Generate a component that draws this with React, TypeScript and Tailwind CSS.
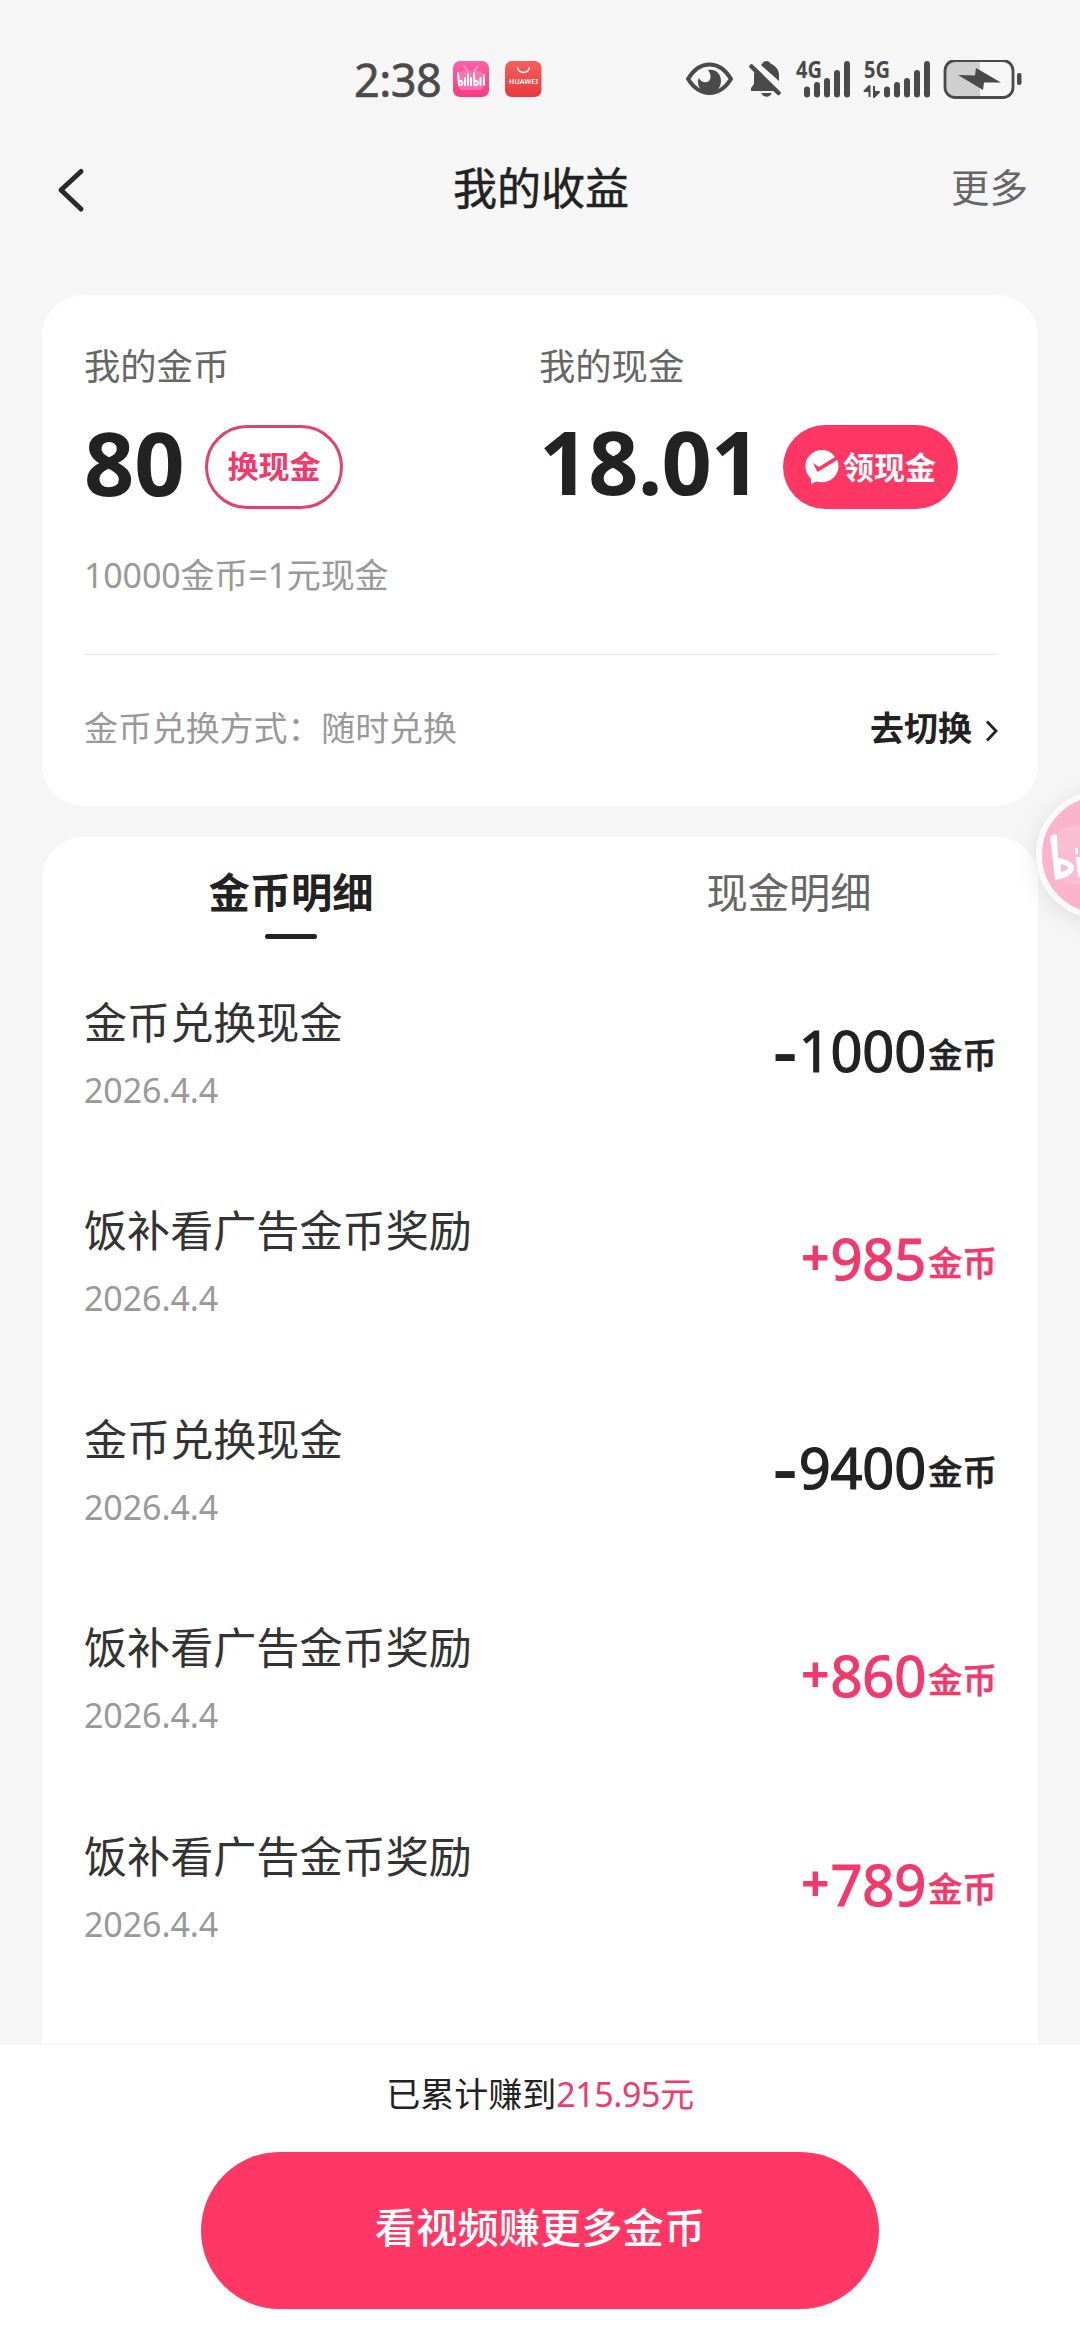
import React from "react";

type Entry = { title: string; date: string; amount: string; gain: boolean };

const entries: Entry[] = [
  { title: "金币兑换现金", date: "2026.4.4", amount: "1000", gain: false },
  { title: "饭补看广告金币奖励", date: "2026.4.4", amount: "985", gain: true },
  { title: "金币兑换现金", date: "2026.4.4", amount: "9400", gain: false },
  { title: "饭补看广告金币奖励", date: "2026.4.4", amount: "860", gain: true },
  { title: "饭补看广告金币奖励", date: "2026.4.4", amount: "789", gain: true },
];

function Signal({ label, data }: { label: string; data?: boolean }) {
  return (
    <svg width="56" height="40" viewBox="0 0 56 40" fill="#4a4a4a" className="overflow-visible">
      <text x="0" y="17.500" fontSize="23.500" fontWeight="700" textLength="26" lengthAdjust="spacingAndGlyphs" fontFamily="Noto Sans">
        {label}
      </text>
      {data ? (
        <>
          <path d="M5.5 37V26L0.5 31H5.5M10 26V37L15 32H10" stroke="#4a4a4a" strokeWidth="2" strokeLinejoin="round" />
          <rect x="20" y="26.500" width="6" height="11" rx="3" />
          <rect x="30" y="22" width="6" height="15.500" rx="3" />
          <rect x="40" y="18" width="6" height="19.500" rx="3" />
          <rect x="50" y="10" width="6" height="27.500" rx="3" />
          <rect x="60" y="1" width="6" height="36.500" rx="3" />
        </>
      ) : (
        <>
          <rect x="8" y="26.500" width="6" height="11" rx="3" />
          <rect x="18" y="22" width="6" height="15.500" rx="3" />
          <rect x="28" y="18" width="6" height="19.500" rx="3" />
          <rect x="38" y="10" width="6" height="27.500" rx="3" />
          <rect x="48" y="1" width="6" height="36.500" rx="3" />
        </>
      )}
    </svg>
  );
}

function StatusBar() {
  return (
    <div className="flex h-[120px] items-start pt-[60px] pl-[354px] text-[#4a4a4a]">
      <span className="w-[99px] text-[45px] leading-[39px] tracking-[-0.5px] [-webkit-text-stroke:0.600px_#4a4a4a]">2:38</span>
      <svg width="36" height="37" viewBox="0 0 36 37">
        <defs>
          <linearGradient id="pinkIcon" x1="0" y1="0" x2="0" y2="1">
            <stop offset="0" stopColor="#fb62a4" />
            <stop offset="1" stopColor="#fb3a82" />
          </linearGradient>
        </defs>
        <rect y="1" width="36" height="36" rx="7" fill="url(#pinkIcon)" />
        <path d="M11 6l4 5M25 6l-4 5" stroke="#fda3ca" strokeWidth="2" />
        <rect x="6" y="11" width="24" height="19" rx="4" fill="#fd8fbe" opacity="0.6" />
        <path
          d="M5 13l1 12c4 1 5-4 1-4M12 18v7M15 14v11M18 18v7M21 13l.5 12c4 1 5-4 1-4M27.500 18v7M31 15v10"
          fill="none"
          stroke="#fff"
          strokeWidth="2"
          strokeLinecap="round"
        />
      </svg>
      <svg width="37" height="37" viewBox="0 0 37 37" className="ml-[16px]">
        <defs>
          <linearGradient id="redIcon" x1="0" y1="0" x2="0" y2="1">
            <stop offset="0" stopColor="#f4605f" />
            <stop offset="1" stopColor="#e9383c" />
          </linearGradient>
        </defs>
        <rect y="1" width="36.500" height="36" rx="7" fill="url(#redIcon)" />
        <path d="M12.500 7a6 5.500 0 0 0 12 0" fill="none" stroke="#fff" strokeWidth="1.400" />
        <text x="4" y="24" fontSize="7" fontWeight="600" fill="#fff" textLength="29" fontFamily="Noto Sans">
          HUAWEI
        </text>
      </svg>
      <svg width="48" height="40" viewBox="0 0 48 40" className="ml-[144px]">
        <path d="M2 19C8 9 15 4.500 23.500 4.500S39 9 45 19C39 28.500 32 33 23.500 33S8 28.500 2 19Z" fill="none" stroke="#4a4a4a" strokeWidth="4" strokeLinejoin="round" />
        <path d="M22 10c8-1 13 4 13 11s-5 12-12 12-11-5-11-11c0-2 .3-3 1-4 2 4 5 5 8 4 4-1 5-7 1-12Z" fill="#4a4a4a" />
      </svg>
      <svg width="34" height="40" viewBox="0 0 34 40" className="ml-[15px]" fill="#4a4a4a">
        <path d="M6 10.500L27.500 31H2v-3l3-4V14Z" />
        <path d="M13 4C14 2 15.500 1 17.500 1s3.500 1 4 2.500C27 6 30 10 30 15v6L12 5Z" />
        <path d="M12.500 33h10c-1 5-9 5-10 0Z" />
        <path d="M2.500 6.500L29.500 33" stroke="#4a4a4a" strokeWidth="4.500" strokeLinecap="round" />
      </svg>
      <div className="ml-[13px] flex">
        <Signal label="4G" />
      </div>
      <div className="ml-[12px] flex">
        <Signal label="5G" data />
      </div>
      <svg width="80" height="40" viewBox="0 0 80 40" className="ml-[23px]">
        <path d="M11 1H37V37H11Q2 37 2 28V10Q2 1 11 1Z" fill="#cfcfcf" />
        <rect x="2" y="0.500" width="68" height="37" rx="10" fill="none" stroke="#4a4a4a" strokeWidth="2.800" />
        <path d="M15 15L32 15.500 33 8 58 22.500 41 22.500 40 30Z" fill="#4a4a4a" />
        <rect x="74" y="13" width="4.500" height="12" rx="2" fill="#4a4a4a" />
      </svg>
    </div>
  );
}

function BalanceCard() {
  return (
    <section className="mx-[42px] h-[511px] rounded-[42px] bg-white pl-[42px] pr-[40px] pt-[46px]">
      <div className="flex">
        <div className="w-[455px]">
          <div className="h-[50px] text-[36.300px] leading-[50px] text-[#666]">我的金币</div>
          <div className="mt-[34px] flex h-[84px] items-center">
            <span className="w-[121px] pb-[11px] text-[88px] leading-[70px] font-bold">80</span>
            <button className="flex h-[84px] w-[138px] items-center justify-center rounded-full border-[3px] border-[#e2416f] pb-[3px] text-[31px] leading-[40px] font-bold text-[#f2396b]">
              换现金
            </button>
          </div>
          <div className="mt-[42px] h-[48px] text-[34px] leading-[48px] tracking-[-0.15px] whitespace-nowrap text-[#999]">10000金币=1元现金</div>
        </div>
        <div>
          <div className="h-[50px] text-[36.300px] leading-[50px] text-[#666]">我的现金</div>
          <div className="mt-[34px] flex h-[84px] items-center">
            <span className="w-[244px] pb-[12px] text-[88px] leading-[70px] font-bold tracking-[-1px]">18.01</span>
            <button className="flex h-[84px] w-[175px] items-center justify-center gap-[4px] rounded-full bg-[#ff3765] text-[31px] leading-[40px] font-bold text-white">
              <svg width="34" height="36" viewBox="0 0 34 36">
                <path
                  d="M17 1C8 1 .5 8 .5 17c0 5 2 9.500 5.500 12.500V35l5.500-2.500C13.500 33 15 33.200 17 33.200c9 0 16.500-7 16.500-16.200 0-2-.4-4-1.200-6L12.500 23 8 14l6 4L30 8C27 3.500 22 1 17 1Z"
                  fill="#fff"
                />
              </svg>
              领现金
            </button>
          </div>
        </div>
      </div>
      <div className="mt-[55px] h-px bg-[#e8e8e8]" />
      <div className="mt-[49px] flex h-[48px] items-center justify-between text-[34px] leading-[48px]">
        <span className="tracking-[-0.1px] text-[#999]">金币兑换方式：随时兑换</span>
        <span className="flex items-center font-bold">
          去切换
          <svg width="14" height="24" viewBox="0 0 14 24" className="mt-[6px] ml-[12px]">
            <path d="M3 2.500L12 12 3 21.500" fill="none" stroke="#222" strokeWidth="2.800" />
          </svg>
        </span>
      </div>
    </section>
  );
}

function HistoryCard() {
  return (
    <section className="mx-[42px] mt-[31px] h-[1206px] overflow-hidden rounded-t-[42px] bg-white">
      <div className="grid h-[114px] grid-cols-2 pt-[30px] text-center text-[41.300px] leading-[50px]">
        <div className="flex flex-col items-center font-bold">
          金币明细
          <span className="mt-[17px] h-[5px] w-[52px] rounded-full bg-[#222]" />
        </div>
        <div className="text-[#666]">现金明细</div>
      </div>
      {entries.map((e, i) => (
        <div key={i} className="flex h-[208.400px] justify-between pt-[42px] pr-[41px] pl-[42px]">
          <div>
            <div className="h-[60px] text-[43.100px] leading-[60px] text-[#333]">{e.title}</div>
            <div className="mt-[15px] h-[44px] text-[34px] leading-[44px] tracking-[-0.1px] text-[#999]">{e.date}</div>
          </div>
          <div className={`mt-[29px] flex h-[60px] items-start ${e.gain ? "text-[#f2396b]" : "text-[#222]"}`}>
            {e.gain ? (
              <span className="mr-[1px] text-[50px] leading-[55px] font-bold">+</span>
            ) : (
              <span className="mr-[2px] origin-right scale-x-[1.3] text-[56px] leading-[56px] font-bold">-</span>
            )}
            <span className="text-[56px] leading-[57px] tracking-[-0.2px] [-webkit-text-stroke:1.200px_currentColor]">{e.amount}</span>
            <span className="ml-[2px] pt-[5px] text-[34.500px] leading-[56px] font-medium [-webkit-text-stroke:0.500px_currentColor]">金币</span>
          </div>
        </div>
      ))}
    </section>
  );
}

function FloatingBubble() {
  return (
    <div className="absolute top-[791px] left-[1036px] h-[128px] w-[128px] rounded-full border-[6px] border-[#fafafa] bg-[#fab5cc] shadow-[0_4px_24px_rgba(0,0,0,0.10)]">
      <svg width="116" height="116" viewBox="0 0 116 116">
        <path d="M32 14l8 14M16 36q6-8 30-8v60q-24 0-30-8Z" fill="#fbbdd2" />
        <path d="M8 40q3-4 7-2l1 23q17 3 16 11-2 8-19 11-2-20-5-43Z M19 67v8q7-2 7-4 0-3-7-4Z" fill="#fff" fillRule="evenodd" />
        <path d="M34 60h8v20h-6ZM33 51h3v6h-3ZM38 51h3v6h-3Z" fill="#fff" />
      </svg>
    </div>
  );
}

export default function App() {
  return (
    <main className="relative flex h-[2340px] w-[1080px] flex-col overflow-hidden bg-[#f6f6f6] font-['Noto_Sans','Noto_Sans_CJK_SC',sans-serif] text-[#222]">
      <StatusBar />
      <header className="grid h-[175px] grid-cols-3 items-start pt-[43px] pr-[52px] pl-[54px]">
        <svg width="32" height="50" viewBox="0 0 32 50" className="mt-[2px]">
          <path d="M27 6.500L7 25 27 44" fill="none" stroke="#2a2a2a" strokeWidth="5" strokeLinecap="round" strokeLinejoin="round" />
        </svg>
        <h1 className="text-center text-[44px] leading-[50px] [-webkit-text-stroke:0.500px_#222]">我的收益</h1>
        <span className="text-right text-[38.500px] leading-[48px] text-[#666]">更多</span>
      </header>
      <BalanceCard />
      <HistoryCard />
      <footer className="flex flex-1 flex-col items-center border-t-2 border-[#f6f6f6] bg-white pt-[25px]">
        <p className="h-[48px] text-[34px] leading-[48px]">
          已累计赚到<span className="tracking-[-0.4px] text-[#ec3c6e]">215.95元</span>
        </p>
        <button className="mt-[34px] h-[157px] w-[678px] rounded-full bg-[#ff3765] pb-[6px] text-[41.300px] font-medium text-white">看视频赚更多金币</button>
      </footer>
      <FloatingBubble />
    </main>
  );
}
